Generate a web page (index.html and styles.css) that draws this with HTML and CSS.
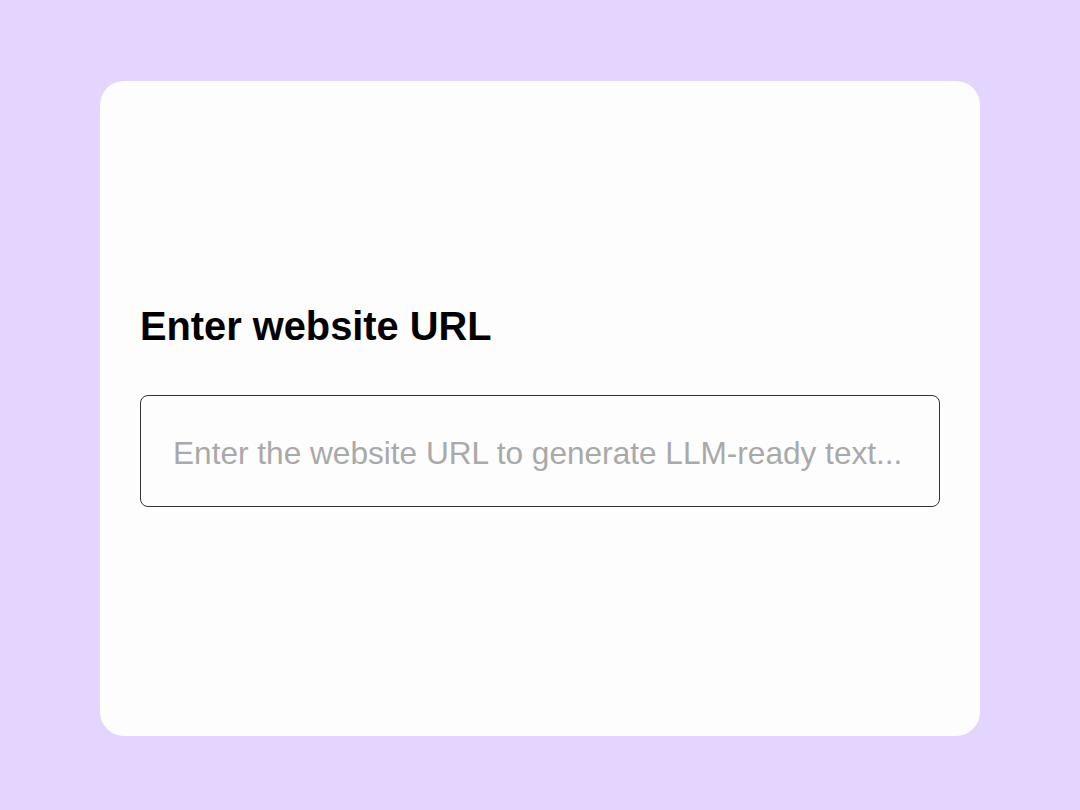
FILE: index.html
```html
<!DOCTYPE html>
<html>
<head>
<meta charset="utf-8">
<link rel="stylesheet" href="styles.css">
</head>
<body>
<main class="card">
  <h1 class="title">Enter website URL</h1>
  <input class="url-input" type="text" placeholder="Enter the website URL to generate LLM-ready text...">
</main>
</body>
</html>
```
FILE: styles.css
```css
html, body {
  margin: 0;
  padding: 0;
}
body {
  background: #e3d5fe;
  width: 1080px;
  height: 810px;
  padding: 81px 100px 0;
  box-sizing: border-box;
  font-family: "Liberation Sans", Arial, sans-serif;
}
.card {
  background: #fdfdfd;
  border-radius: 24px;
  height: 655px;
  box-sizing: border-box;
  padding: 222px 40px 0;
  display: flex;
  flex-direction: column;
  gap: 46px;
}
.title {
  margin: 0;
  font-size: 39.8px;
  line-height: 46px;
  font-weight: 700;
  color: #000;
}
.url-input {
  display: block;
  width: 100%;
  height: 112px;
  box-sizing: border-box;
  border: 1px solid #333;
  border-radius: 8px;
  background: #fdfdfd;
  padding: 4px 32px 0 32px;
  font-family: "Liberation Sans", Arial, sans-serif;
  font-size: 31.6px;
  color: #000;
  outline: none;
}
.url-input::placeholder {
  color: #a9a9a9;
  opacity: 1;
}
```
